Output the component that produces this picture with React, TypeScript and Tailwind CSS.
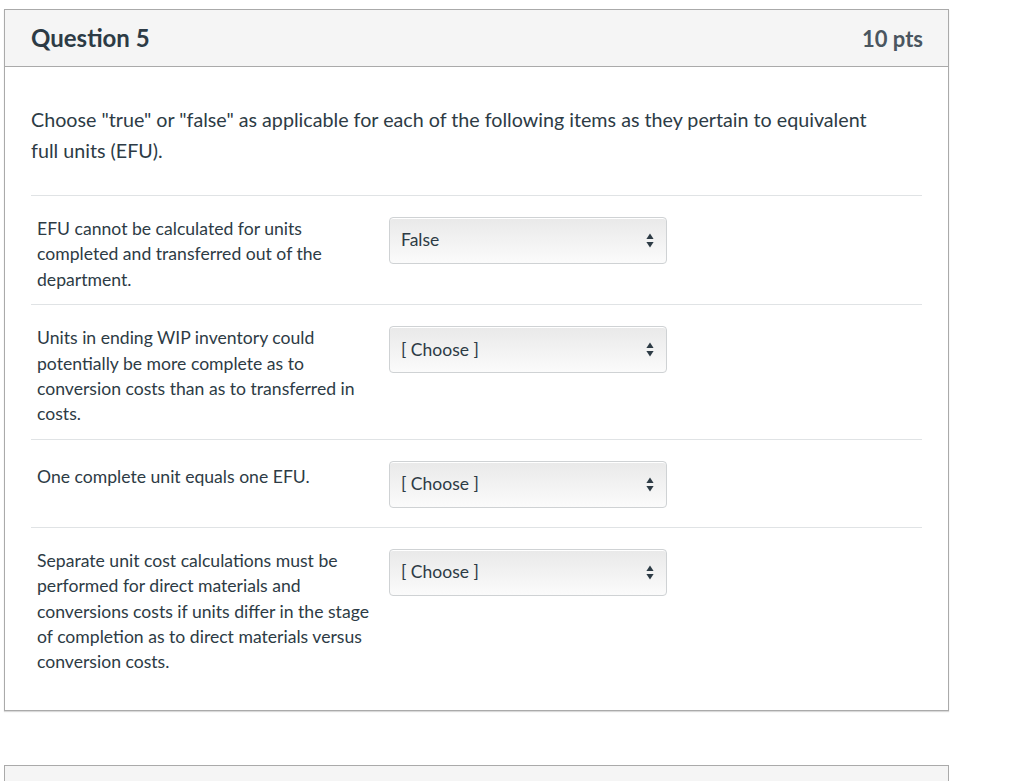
import React from "react";

type Item = { text: string; value: string };

const items: Item[] = [
  { text: "EFU cannot be calculated for units completed and transferred out of the department.", value: "False" },
  {
    text: "Units in ending WIP inventory could potentially be more complete as to conversion costs than as to transferred in costs.",
    value: "[ Choose ]",
  },
  { text: "One complete unit equals one EFU.", value: "[ Choose ]" },
  {
    text: "Separate unit cost calculations must be performed for direct materials and conversions costs if units differ in the stage of completion as to direct materials versus conversion costs.",
    value: "[ Choose ]",
  },
];

function FakeSelect({ value }: { value: string }) {
  return (
    <div className="flex h-[47px] w-[278px] shrink-0 items-center justify-between rounded-[4px] border border-[#cfd2d4] bg-gradient-to-b from-[#e9e9e9] to-[#fbfbfb] pl-[11px] pr-[12px] shadow-[inset_0_1px_0_#fff]">
      <span className="text-[17.5px] text-[#2d3b45]">{value}</span>
      <svg width="8" height="15" viewBox="0 0 8 15" className="text-[#2d3b45]">
        <path d="M4 0.5 L7.6 6 L0.4 6 Z" fill="currentColor" />
        <path d="M4 14.5 L7.6 9 L0.4 9 Z" fill="currentColor" />
      </svg>
    </div>
  );
}

export default function App() {
  return (
    <div className="h-[781px] overflow-hidden bg-white pl-[4px] pt-[9px] text-[#2d3b45] [font-family:Lato,'Noto_Sans',sans-serif]">
      <div className="w-[945px] border border-[#aaaaaa] shadow-[0_1px_1px_rgba(0,0,0,0.15)]">
        <div className="flex h-[57px] items-center justify-between border-b border-[#aaaaaa] bg-[#f5f5f5] pl-[26px] pr-[25px]">
          <h2 className="text-[24px] font-bold">Question 5</h2>
          <span className="text-[22px] font-bold text-[#4a5660]">10 pts</span>
        </div>
        <div className="px-[26px] pb-[35px] pt-[37px]">
          <p className="max-w-[850px] text-[19.7px] leading-[31px]">
            Choose "true" or "false" as applicable for each of the following items as they pertain to equivalent full
            units (EFU).
          </p>
          <div className="mt-[29px]">
            {items.map((item, i) => (
              <div
                key={i}
                className={
                  "flex items-start border-t border-[#e0e3e5] pt-[20px] " + (i === items.length - 1 ? "pb-0" : "pb-[12px]")
                }
              >
                <p
                  className={
                    "w-[358px] shrink-0 pl-[6px] pr-[9px] text-[17.6px] leading-[25.4px] " + (i === 2 ? "pt-[4px]" : "")
                  }
                >
                  {item.text}
                </p>
                <div className="mb-[7px] pt-[1px]">
                  <FakeSelect value={item.value} />
                </div>
              </div>
            ))}
          </div>
        </div>
      </div>
      <div className="mt-[54px] h-[60px] w-[945px] border border-b-0 border-[#aaaaaa] bg-[#f5f5f5]" />
    </div>
  );
}
